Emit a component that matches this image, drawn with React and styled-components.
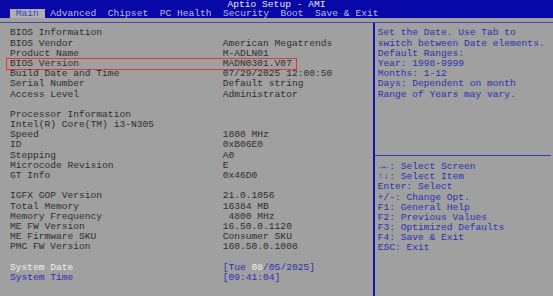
import styled, { createGlobalStyle } from "styled-components";

const BLUE = "#0808a8";
const GRAY = "#a0a0a0";
const INK = "#2e2e2e";
const HELP = "#2a30b0";
const HILITE = "#f0f0f0";

const GlobalStyle = createGlobalStyle`
  html, body {
    margin: 0;
    padding: 0;
    background: ${GRAY};
  }
  body {
    font-family: "Liberation Mono", "DejaVu Sans Mono", monospace;
    font-size: 9.6px;
  }
`;

const Screen = styled.div`
  width: 553px;
  height: 296px;
  display: flex;
  flex-direction: column;
  background: ${GRAY};
  color: ${INK};
  overflow: hidden;
`;

const Header = styled.div`
  background: ${BLUE};
  height: 18px;
  display: flex;
  flex-direction: column;
`;

const Title = styled.div`
  height: 9px;
  line-height: 9px;
  text-align: center;
  color: #e6e6f0;
  white-space: pre;
`;

const TabBar = styled.div`
  display: flex;
  height: 9px;
  padding-left: 10px;
`;

const Tab = styled.div`
  padding: 0 5.76px;
  line-height: 10px;
  white-space: pre;
  color: ${p => (p.$active ? "#3848b8" : "#b8bce8")};
  background: ${p => (p.$active ? "#b0b0b0" : "transparent")};
`;

const Rule = styled.div`
  margin-top: 4px;
  height: 1px;
  background: #4a4aa0;
`;

const Body = styled.div`
  flex: 1;
  display: flex;
`;

const LeftPane = styled.div`
  width: 363px;
  padding: 5.4px 0 0 10px;
`;

const Row = styled.div`
  position: relative;
  display: grid;
  grid-template-columns: 212.8px 1fr;
  height: 10.2px;
  line-height: 10.2px;
  white-space: pre;

  ${p =>
    p.$boxed &&
    `
    &::after {
      content: "";
      position: absolute;
      left: -4px;
      top: -0.5px;
      width: 289px;
      height: 9.5px;
      border: 1px solid #e03838;
    }
  `}
`;

const Label = styled.span`
  color: ${p => p.$color || INK};
`;

const Value = styled.span`
  color: ${p => p.$color || INK};
`;

const Hi = styled.span`
  color: ${HILITE};
`;

const RightPane = styled.div`
  width: 176px;
  border-left: 2px solid #1414a8;
  display: flex;
  flex-direction: column;
`;

const HelpTop = styled.div`
  height: 127px;
  padding: 5.4px 0 0 2.7px;
  color: ${HELP};
`;

const HelpBottom = styled.div`
  flex: 1;
  border-top: 1px solid #3a3ab8;
  padding: 5.6px 0 0 2.7px;
  color: ${HELP};
`;

const HelpLine = styled.div`
  height: 10.2px;
  line-height: 10.2px;
  white-space: pre;
`;

const tabs = ["Main", "Advanced", "Chipset", "PC Health", "Security", "Boot", "Save & Exit"];

const info = [
  ["BIOS Information", ""],
  ["BIOS Vendor", "American Megatrends"],
  ["Product Name", "M-ADLN01"],
  ["BIOS Version", "MADN0301.V07", true],
  ["Build Date and Time", "07/29/2025 12:00:50"],
  ["Serial Number", "Default string"],
  ["Access Level", "Administrator"],
  ["", ""],
  ["Processor Information", ""],
  ["Intel(R) Core(TM) i3-N305", ""],
  ["Speed", "1800 MHz"],
  ["ID", "0xB06E0"],
  ["Stepping", "A0"],
  ["Microcode Revision", "E"],
  ["GT Info", "0x46D0"],
  ["", ""],
  ["IGFX GOP Version", "21.0.1056"],
  ["Total Memory", "16384 MB"],
  ["Memory Frequency", " 4800 MHz"],
  ["ME FW Version", "16.50.0.1120"],
  ["ME Firmware SKU", "Consumer SKU"],
  ["PMC FW Version", "160.50.0.1008"],
  ["", ""],
];

const helpTop = [
  "Set the Date. Use Tab to",
  "switch between Date elements.",
  "Default Ranges:",
  "Year: 1998-9999",
  "Months: 1-12",
  "Days: Dependent on month",
  "Range of Years may vary.",
];

const helpKeys = [
  "→←: Select Screen",
  "↑↓: Select Item",
  "Enter: Select",
  "+/-: Change Opt.",
  "F1: General Help",
  "F2: Previous Values",
  "F3: Optimized Defaults",
  "F4: Save & Exit",
  "ESC: Exit",
];

export default function App() {
  return (
    <>
      <GlobalStyle />
      <Screen>
        <Header>
          <Title>Aptio Setup - AMI</Title>
          <TabBar>
            {tabs.map((t, i) => (
              <Tab key={t} $active={i === 0}>
                {t}
              </Tab>
            ))}
          </TabBar>
        </Header>
        <Rule />
        <Body>
          <LeftPane>
            {info.map(([label, value, boxed], i) => (
              <Row key={i} $boxed={boxed}>
                <Label>{label}</Label>
                <Value>{value}</Value>
              </Row>
            ))}
            <Row>
              <Label $color={HILITE}>System Date</Label>
              <Value $color={HELP}>
                [Tue <Hi>08</Hi>/05/2025]
              </Value>
            </Row>
            <Row>
              <Label $color={HELP}>System Time</Label>
              <Value $color={HELP}>[09:41:04]</Value>
            </Row>
          </LeftPane>
          <RightPane>
            <HelpTop>
              {helpTop.map(l => (
                <HelpLine key={l}>{l}</HelpLine>
              ))}
            </HelpTop>
            <HelpBottom>
              {helpKeys.map(l => (
                <HelpLine key={l}>{l}</HelpLine>
              ))}
            </HelpBottom>
          </RightPane>
        </Body>
      </Screen>
    </>
  );
}
